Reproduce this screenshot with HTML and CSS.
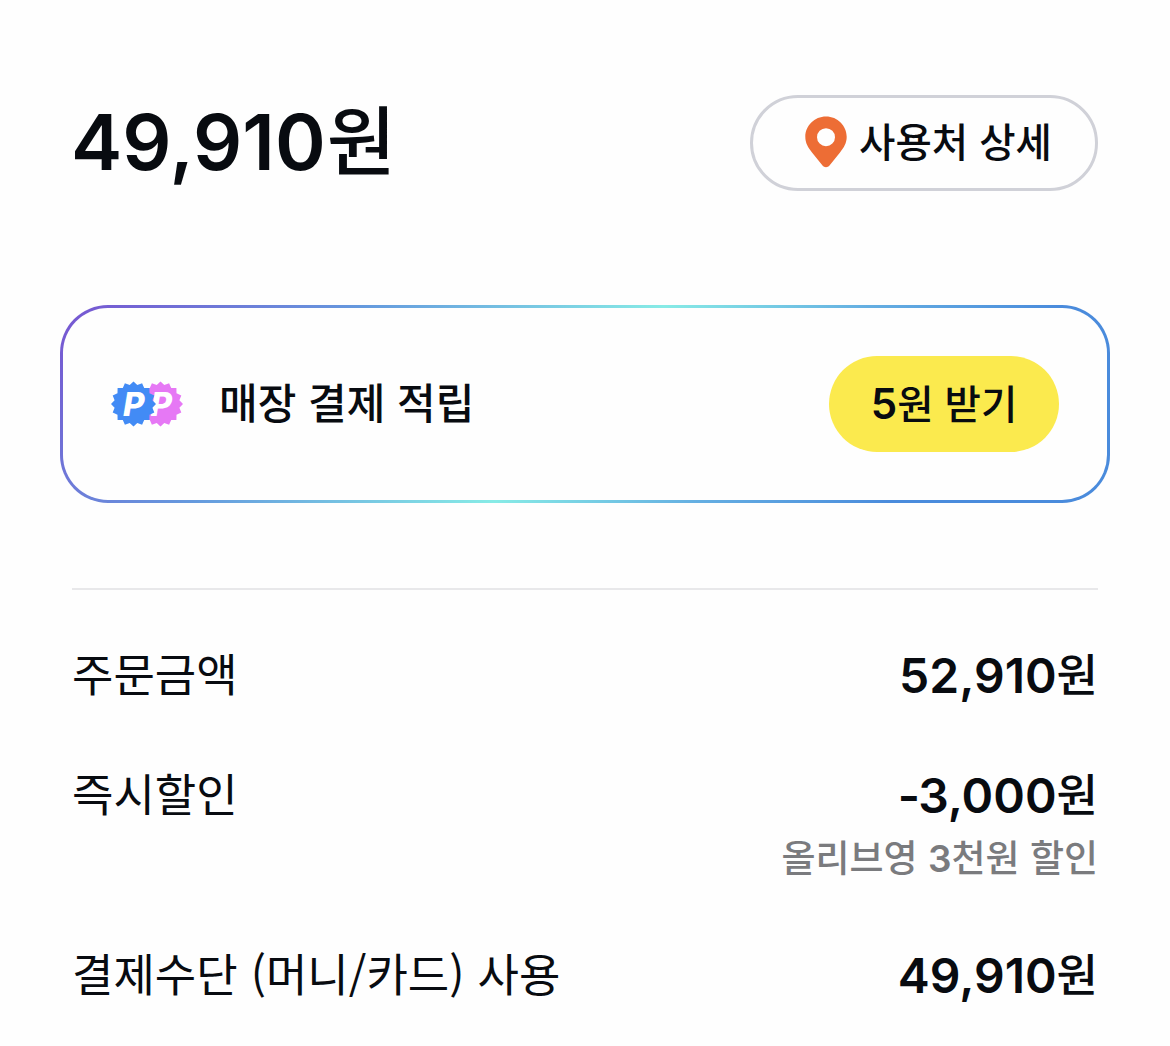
FILE: index.html
```html
<!DOCTYPE html>
<html lang="ko">
<head>
  <meta charset="utf-8">
  <meta name="viewport" content="width=device-width, initial-scale=1">
  <title>결제 상세</title>
  <link rel="stylesheet" href="styles.css">
</head>
<body>
  <main class="receipt">
    <header class="summary">
      <h1 class="total">49,910<span class="won">원</span></h1>
      <button class="btn btn-outline">
        <svg class="pin" viewBox="0 0 42 52" aria-hidden="true">
          <path fill="#ed6d35" fill-rule="evenodd" d="M21 0.500C9.500 0.500 0.300 9.600 0.300 20.800C0.300 27 3 31.500 7 36.500L17.500 49.600C19.300 51.800 22.700 51.800 24.500 49.600L35 36.500C39 31.500 41.700 27 41.700 20.800C41.700 9.600 32.500 0.500 21 0.500ZM21 12.200A9 9 0 1 1 21 30.200A9 9 0 1 1 21 12.200Z"/>
        </svg>
        <span class="btn-label">사용처 상세</span>
      </button>
    </header>

    <section class="reward">
      <svg class="reward-icon" viewBox="0 0 72 46" aria-hidden="true">
        <defs>
          <polygon id="seal" points="0,-22.5 3.800,-18.900 8.600,-20.800 10.700,-16 15.900,-15.900 16,-10.700 20.800,-8.600 18.900,-3.800 22.500,0 18.900,3.800 20.800,8.600 16,10.700 15.900,15.900 10.700,16 8.600,20.800 3.800,18.900 0,22.500 -3.800,18.900 -8.600,20.800 -10.700,16 -15.900,15.900 -16,10.700 -20.800,8.600 -18.900,3.800 -22.500,0 -18.900,-3.800 -20.800,-8.600 -16,-10.700 -15.900,-15.900 -10.700,-16 -8.600,-20.800 -3.800,-18.900"/>
        </defs>
        <use class="seal-pink" href="#seal" x="49.500" y="23"/>
        <text class="seal-letter" x="39.500" y="34.500">P</text>
        <use class="seal-blue" href="#seal" x="22.500" y="23"/>
        <text class="seal-letter" x="12" y="34.500">P</text>
      </svg>
      <span class="reward-title">매장 결제 적립</span>
      <button class="btn btn-yellow"><span class="btn-label"><span class="num">5</span>원 받기</span></button>
    </section>

    <dl class="details">
      <div class="row">
        <dt>주문금액</dt>
        <dd>52,910<span class="won">원</span></dd>
      </div>
      <div class="row">
        <dt>즉시할인</dt>
        <dd><span class="minus">-</span>3,000<span class="won">원</span>
          <p class="note">올리브영 <span class="num">3</span>천원 할인</p>
        </dd>
      </div>
      <div class="row">
        <dt>결제수단 (머니/카드) 사용</dt>
        <dd>49,910<span class="won">원</span></dd>
      </div>
    </dl>
  </main>
</body>
</html>
```
FILE: styles.css
```css
* {
  box-sizing: border-box;
}

body {
  margin: 0;
  background: #fefefe;
  color: #080b10;
  font-family: "Noto Sans CJK KR", sans-serif;
}

.receipt {
  padding: 95px 60px 0;
}

.summary {
  display: flex;
  align-items: center;
  justify-content: space-between;
  height: 96px;
  padding: 0 12px;
}

.total {
  margin: 0 0 0 -1px;
  padding-bottom: 1px;
  font-family: Inter, "Noto Sans CJK KR", sans-serif;
  font-size: 77px;
  font-weight: 600;
  line-height: 93px;
}

.won {
  font-family: "Noto Sans CJK KR", sans-serif;
  font-weight: 500;
  line-height: 0;
}

.total .won {
  margin-left: 1px;
  font-size: 75px;
  vertical-align: 1px;
}

.num {
  font-family: Inter, sans-serif;
  font-weight: 600;
  line-height: 0;
}

.btn {
  display: flex;
  align-items: center;
  justify-content: center;
  height: 96px;
  padding: 0;
  border: 0;
  border-radius: 48px;
  color: inherit;
  font-family: inherit;
  font-size: 39.5px;
  font-weight: 500;
  line-height: 1;
}

.btn-label {
  padding-bottom: 4px;
}

.btn-label .num {
  font-size: 42px;
}

.btn-outline {
  width: 348px;
  gap: 12px;
  padding: 0 0 2px 9px;
  border: 3px solid #d0d1d8;
  background: #fefefe;
}

.pin {
  width: 42px;
  height: 52px;
}

.btn-yellow {
  width: 230px;
  margin-left: auto;
  background: #fbea4e;
}

.reward {
  display: flex;
  align-items: center;
  height: 198px;
  margin-top: 114px;
  padding: 0 48px;
  border: 3px solid transparent;
  border-radius: 48px;
  background:
    linear-gradient(#fefefe, #fefefe) padding-box,
    linear-gradient(131deg, #7659d2 2%, #659ade 25%, #87ebe6 49.5%, #65afe2 66%, #4a8bdc 82%) border-box;
}

.reward-icon {
  width: 72px;
  height: 46px;
}

.seal-pink {
  fill: #e678f5;
}

.seal-blue {
  fill: #428bf5;
}

.seal-letter {
  fill: #fff;
  font: italic 800 33px Inter, sans-serif;
}

.reward-title {
  margin-left: 36px;
  padding-bottom: 8px;
  font-size: 42px;
  font-weight: 500;
}

.details {
  margin: 85px 12px 0;
  padding-top: 53px;
  border-top: 2px solid #e8e8ea;
}

.row {
  display: flex;
  justify-content: space-between;
  margin-bottom: 60px;
}

.row dt {
  font-size: 45px;
  line-height: 60px;
  word-spacing: 0.5px;
}

.row dd {
  margin: 0 0 -3px;
  padding-top: 3px;
  font-family: Inter, "Noto Sans CJK KR", sans-serif;
  font-size: 48px;
  font-weight: 600;
  line-height: 60px;
  text-align: right;
}

.row .won {
  font-size: 45px;
  vertical-align: 1px;
}

.minus {
  margin-right: -2px;
}

.note {
  margin: 0;
  color: #7a7b7e;
  font-family: "Noto Sans CJK KR", sans-serif;
  font-size: 37px;
  font-weight: 500;
}
```
